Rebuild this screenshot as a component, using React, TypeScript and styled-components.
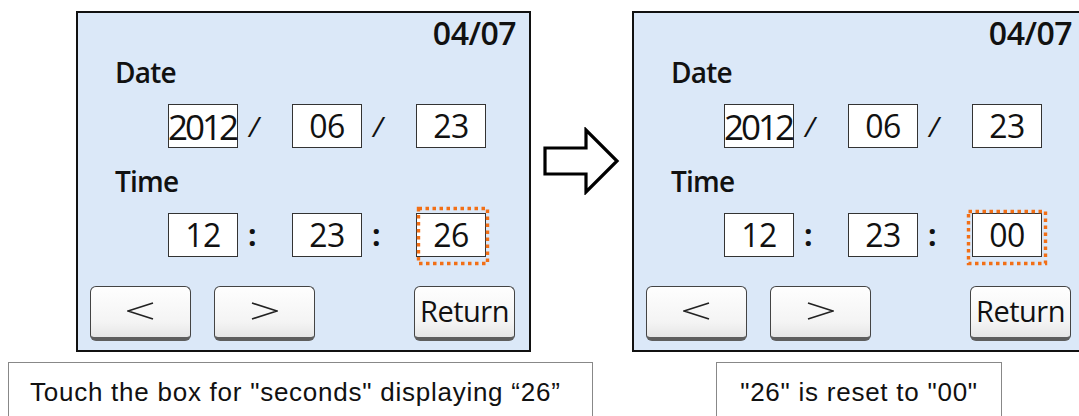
import React, { ReactElement } from "react";
import styled, { createGlobalStyle } from "styled-components";

const GlobalStyle = createGlobalStyle`
  html, body {
    margin: 0;
    padding: 0;
    background: #fff;
  }
  body {
    width: 1079px;
    height: 416px;
    overflow: hidden;
  }
`;

type Offsets = { top: number; right: number; bottom: number; left: number };

type ScreenProps = {
  seconds: string;
  mark: Offsets;
};

function Chevron({ dir }: { dir: "left" | "right" }): ReactElement {
  const pts = dir === "left" ? "26,1 1,9 26,17" : "1,1 26,9 1,17";
  return (
    <svg width="27" height="18" viewBox="0 0 27 18">
      <polyline points={pts} fill="none" stroke="#222" strokeWidth="1.7" />
    </svg>
  );
}

function Field({ value, wide, mark }: { value: string; wide?: boolean; mark?: Offsets }): ReactElement {
  return (
    <Box>
      <Digits $wide={wide}>{value}</Digits>
      {mark && (
        <Mark
          style={{ top: -mark.top, right: -mark.right, bottom: -mark.bottom, left: -mark.left }}
        >
          <svg width="100%" height="100%">
            <rect
              x="1.5"
              y="1.5"
              width="calc(100% - 3px)"
              height="calc(100% - 3px)"
              fill="none"
              stroke="#f26f16"
              strokeWidth="3.4"
              strokeDasharray="3.5 3.5"
            />
          </svg>
        </Mark>
      )}
    </Box>
  );
}

function Screen({ seconds, mark }: ScreenProps): ReactElement {
  return (
    <Panel>
      <PageNo>04/07</PageNo>
      <Label $top={9}>Date</Label>
      <FieldRow $top={18}>
        <Field value="2012" wide />
        <Sep>/</Sep>
        <Field value="06" />
        <Sep>/</Sep>
        <Field value="23" />
      </FieldRow>
      <Label $top={19}>Time</Label>
      <FieldRow $top={18}>
        <Field value="12" />
        <Sep $colon>:</Sep>
        <Field value="23" />
        <Sep $colon>:</Sep>
        <Field value={seconds} mark={mark} />
      </FieldRow>
      <ButtonRow>
        <Key>
          <Chevron dir="left" />
        </Key>
        <Key>
          <Chevron dir="right" />
        </Key>
        <Spacer />
        <Key $text>Return</Key>
      </ButtonRow>
    </Panel>
  );
}

export default function App(): ReactElement {
  return (
    <>
      <GlobalStyle />
      <Stage>
        <Screens>
          <Screen seconds="26" mark={{ top: 7, right: 4, bottom: 9, left: 0 }} />
          <ArrowCell>
            <svg width="78" height="68" viewBox="0 0 78 68">
              <polygon
                points="2,21 43,21 43,3 74,34 43,65 43,47 2,47"
                fill="#fff"
                stroke="#000"
                strokeWidth="3.2"
                strokeLinejoin="miter"
              />
            </svg>
          </ArrowCell>
          <Screen seconds="00" mark={{ top: 4, right: 6, bottom: 9, left: 6 }} />
        </Screens>
        <Captions>
          <Caption $width={585}>Touch the box for "seconds" displaying “26”</Caption>
          <Caption $width={286} $center>
            "26" is reset to "00"
          </Caption>
        </Captions>
      </Stage>
    </>
  );
}

const Stage = styled.div`
  width: 1079px;
  height: 416px;
  overflow: hidden;
`;

const Screens = styled.div`
  display: flex;
  padding: 11px 0 0 76px;
`;

const Panel = styled.div`
  flex-shrink: 0;
  box-sizing: border-box;
  width: 455px;
  height: 341px;
  display: flex;
  flex-direction: column;
  padding: 4px 13px 0 12px;
  background: #dbe8f8;
  border: 2px solid #111;
  font-family: "Open Sans", "DejaVu Sans", sans-serif;
  color: #111;
`;

const PageNo = styled.div`
  align-self: flex-end;
  height: 32px;
  font-size: 32px;
  line-height: 32px;
  font-weight: 600;
  letter-spacing: -0.5px;
`;

const Label = styled.div<{ $top: number }>`
  margin: ${(p) => p.$top}px 0 0 25px;
  height: 28px;
  font-size: 28px;
  line-height: 28px;
  font-weight: 600;
  letter-spacing: -0.8px;
`;

const FieldRow = styled.div<{ $top: number }>`
  display: flex;
  align-items: center;
  margin: ${(p) => p.$top}px 0 0 78px;
`;

const Box = styled.div`
  position: relative;
  box-sizing: border-box;
  width: 70px;
  height: 44px;
  display: flex;
  align-items: center;
  justify-content: center;
  background: #fff;
  border: 1.5px solid #333;
`;

const Digits = styled.span<{ $wide?: boolean }>`
  font-size: ${(p) => (p.$wide ? 35 : 32)}px;
  font-weight: 500;
  line-height: 1;
  letter-spacing: ${(p) => (p.$wide ? -3 : -0.5)}px;
  margin-right: ${(p) => (p.$wide ? 2 : 0)}px;
`;

const Sep = styled.span<{ $colon?: boolean }>`
  box-sizing: border-box;
  width: 54px;
  padding-left: ${(p) => (p.$colon ? 10 : 11)}px;
  font-size: ${(p) => (p.$colon ? 30 : 28)}px;
  font-weight: ${(p) => (p.$colon ? 700 : 400)};
  font-style: ${(p) => (p.$colon ? "normal" : "italic")};
  line-height: 1;
`;

const Mark = styled.div`
  position: absolute;
  pointer-events: none;

  svg {
    display: block;
    overflow: visible;
  }
`;

const ButtonRow = styled.div`
  display: flex;
  gap: 23px;
  margin-top: 29px;
  padding-right: 1px;
`;

const Spacer = styled.div`
  flex: 1;
`;

const Key = styled.div<{ $text?: boolean }>`
  box-sizing: border-box;
  width: 101px;
  height: 55px;
  display: flex;
  align-items: center;
  justify-content: center;
  padding-bottom: 3px;
  background: linear-gradient(#fefefe, #f4f4f4 70%, #e6e6e6);
  border: 1.5px solid #444;
  border-bottom: 4px solid #5e5e5e;
  border-radius: 6px;
  font-size: 29px;
  font-weight: 500;
  letter-spacing: -0.5px;
  color: #111;
`;

const ArrowCell = styled.div`
  flex-shrink: 0;
  width: 101px;
  height: 341px;
  display: flex;
  align-items: flex-start;
  justify-content: center;
  padding-top: 116px;
  box-sizing: border-box;
`;

const Captions = styled.div`
  display: flex;
  gap: 123px;
  margin-top: 10px;
  padding-left: 8px;
`;

const Caption = styled.div<{ $width: number; $center?: boolean }>`
  box-sizing: border-box;
  width: ${(p) => p.$width}px;
  height: 70px;
  padding: 14px 0 0 ${(p) => (p.$center ? 0 : 21)}px;
  text-align: ${(p) => (p.$center ? "center" : "left")};
  border: 1.5px solid #888;
  font-family: "Liberation Sans", Arial, sans-serif;
  font-size: 26px;
  line-height: 30px;
  letter-spacing: 0.75px;
  color: #111;
`;
